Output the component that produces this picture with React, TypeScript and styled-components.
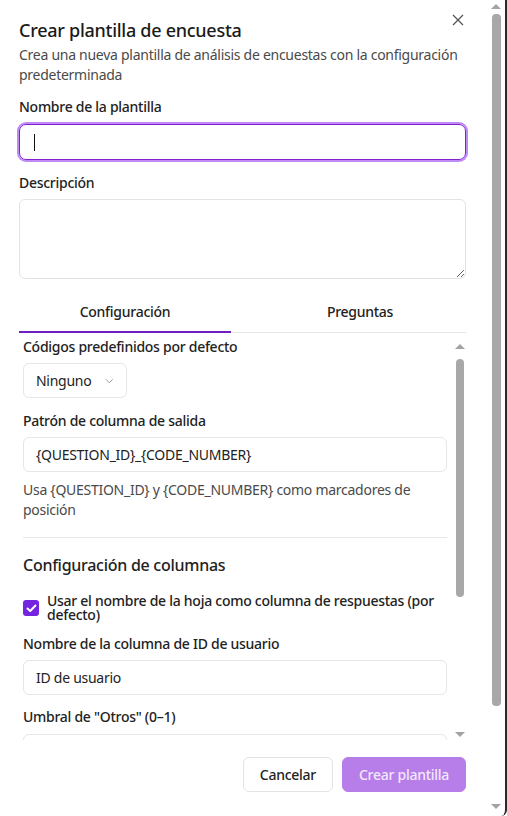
import React from "react";
import styled, { createGlobalStyle } from "styled-components";

const Global = createGlobalStyle`
  html, body { margin: 0; padding: 0; background: #ffffff; }
  body { font-family: "Noto Sans", "Open Sans", sans-serif; color: #1f1f1f; letter-spacing: -0.27px; -webkit-font-smoothing: antialiased; }
  * { box-sizing: border-box; }
`;

const Page = styled.div`
  display: flex;
  width: 507px;
  height: 816px;
  overflow: hidden;
  border-right: 2px solid #2a2a2a;
  border-bottom-right-radius: 6px;
`;

const Dialog = styled.div`
  position: relative;
  flex: 1;
  display: flex;
  flex-direction: column;
  padding: 18px 24px 0 19px;
`;

const CloseButton = styled.button`
  position: absolute;
  top: 12px;
  right: 24px;
  width: 16px;
  height: 16px;
  padding: 0;
  border: none;
  background: none;
  color: #555;
  display: flex;
  align-items: center;
  justify-content: center;
`;

const Title = styled.h2`
  margin: 0;
  font-size: 18px;
  line-height: 24px;
  font-weight: 500;
  color: #1a1a1a;
`;

const Description = styled.p`
  margin: 3px 0 0;
  font-size: 14px;
  line-height: 20px;
  color: #4a4a4a;
`;

const Label = styled.div<{ $top: number }>`
  margin-top: ${(p) => p.$top}px;
  font-size: 14px;
  line-height: 20px;
  font-weight: 500;
  color: #222;
`;

const FocusedInput = styled.div`
  margin-top: 7px;
  height: 36px;
  border: 1.5px solid #7e22ce;
  border-radius: 7px;
  box-shadow: 0 0 0 2px #bf8af5;
  display: flex;
  align-items: center;
  padding-left: 14px;
`;

const Caret = styled.span`
  width: 1px;
  height: 17px;
  background: #111;
`;

const TextArea = styled.textarea`
  margin-top: 6px;
  height: 80px;
  width: 100%;
  border: 1px solid #e3e3e3;
  border-radius: 6px;
  resize: vertical;
  font: inherit;
  outline: none;
`;

const TabList = styled.div`
  margin-top: 16px;
  display: grid;
  grid-template-columns: 1fr 1fr;
  column-gap: 23px;
  border-bottom: 1px solid #e6e6e6;
`;

const Tab = styled.div<{ $active?: boolean }>`
  height: 38px;
  padding-top: 7px;
  text-align: center;
  font-size: 14px;
  line-height: 20px;
  font-weight: 500;
  color: #222;
  border-bottom: 2px solid ${(p) => (p.$active ? "#6d1fc0" : "transparent")};
  margin-bottom: -1px;
`;

const ScrollArea = styled.div`
  height: 407px;
  display: flex;
  overflow: hidden;
`;

const ScrollContent = styled.div`
  flex: 1;
  display: flex;
  flex-direction: column;
  padding: 4px 7px 0 4px;
`;

const ScrollBar = styled.div<{ $width: number }>`
  width: ${(p) => p.$width}px;
  display: flex;
  flex-direction: column;
  align-items: center;
`;

const Arrow = styled.div<{ $down?: boolean; $h: number }>`
  height: ${(p) => p.$h}px;
  display: flex;
  align-items: center;
  justify-content: center;
  &::before {
    content: "";
    border-left: 5px solid transparent;
    border-right: 5px solid transparent;
    ${(p) => (p.$down ? "border-top: 5px solid #a3a3a3;" : "border-bottom: 5px solid #a3a3a3;")}
  }
`;

const Thumb = styled.div<{ $h: number; $mt: number; $w: number }>`
  margin-top: ${(p) => p.$mt}px;
  width: ${(p) => p.$w}px;
  height: ${(p) => p.$h}px;
  border-radius: 4px;
  background: #a8a8a8;
`;

const Spacer = styled.div`
  flex: 1;
`;

const Field = styled.div<{ $top?: number; $width?: string }>`
  margin-top: ${(p) => p.$top ?? 6}px;
  height: 35px;
  width: ${(p) => p.$width ?? "100%"};
  border: 1px solid #e6e6e6;
  border-radius: 6px;
  display: flex;
  align-items: center;
  padding: 0 12px;
  font-size: 14px;
  color: #222;
  flex-shrink: 0;
`;

const SelectField = styled(Field)`
  gap: 14px;
  padding: 0 12px;
`;

const Hint = styled.p`
  margin: 8px 0 0;
  font-size: 14px;
  line-height: 20px;
  color: #4a4a4a;
`;

const Divider = styled.hr`
  margin: 17px 0 0;
  border: none;
  border-top: 1px solid #e6e6e6;
  width: 100%;
`;

const SectionHeading = styled.h3`
  margin: 15px 0 0;
  font-size: 16px;
  line-height: 24px;
  font-weight: 500;
  color: #222;
`;

const CheckRow = styled.label`
  margin-top: 17px;
  display: flex;
  align-items: center;
  gap: 8px;
  font-size: 14px;
  line-height: 14px;
  font-weight: 500;
  color: #222;
`;

const CheckBox = styled.span`
  width: 16px;
  height: 16px;
  border-radius: 3px;
  background: #7424e0;
  flex-shrink: 0;
  display: flex;
  align-items: center;
  justify-content: center;
`;

const Footer = styled.div`
  margin-top: 17px;
  display: flex;
  justify-content: flex-end;
  gap: 9px;
`;

const Button = styled.button<{ $primary?: boolean }>`
  height: 35px;
  padding: 0 16px;
  border-radius: 6px;
  font-family: inherit;
  letter-spacing: inherit;
  font-size: 14px;
  font-weight: 500;
  border: 1px solid ${(p) => (p.$primary ? "#b77ee9" : "#e3e3e3")};
  background: ${(p) => (p.$primary ? "#b77ee9" : "#ffffff")};
  color: ${(p) => (p.$primary ? "#f3e8fd" : "#222")};
`;

const OuterBar = styled(ScrollBar)`
  padding-right: 3px;
`;

const hintText = "Usa {QUESTION_ID} y {CODE_NUMBER} como marcadores de posición";

export default function App() {
  return (
    <>
      <Global />
      <Page>
        <Dialog>
          <CloseButton aria-label="Cerrar">
            <svg width="12" height="12" viewBox="0 0 12 12" fill="none" stroke="#555" strokeWidth="1.3">
              <path d="M1 1L11 11M11 1L1 11" />
            </svg>
          </CloseButton>
          <Title>Crear plantilla de encuesta</Title>
          <Description>
            Crea una nueva plantilla de análisis de encuestas con la configuración predeterminada
          </Description>
          <Label $top={12}>Nombre de la plantilla</Label>
          <FocusedInput>
            <Caret />
          </FocusedInput>
          <Label $top={13}>Descripción</Label>
          <TextArea />
          <TabList>
            <Tab $active>Configuración</Tab>
            <Tab>Preguntas</Tab>
          </TabList>
          <ScrollArea>
            <ScrollContent>
              <Label $top={0}>Códigos predefinidos por defecto</Label>
              <SelectField $width="104px">
                Ninguno
                <svg width="10" height="6" viewBox="0 0 10 6" fill="none" stroke="#888" strokeWidth="1">
                  <path d="M1 1L5 5L9 1" />
                </svg>
              </SelectField>
              <Label $top={13}>Patrón de columna de salida</Label>
              <Field>{"{QUESTION_ID}_{CODE_NUMBER}"}</Field>
              <Hint>{hintText}</Hint>
              <Divider />
              <SectionHeading>Configuración de columnas</SectionHeading>
              <CheckRow>
                <CheckBox>
                  <svg width="11" height="9" viewBox="0 0 11 9" fill="none" stroke="#fff" strokeWidth="2" strokeLinecap="round" strokeLinejoin="round">
                    <path d="M1.5 4.5L4.2 7L9.5 1.5" />
                  </svg>
                </CheckBox>
                <span>Usar el nombre de la hoja como columna de respuestas (por defecto)</span>
              </CheckRow>
              <Label $top={12}>Nombre de la columna de ID de usuario</Label>
              <Field>ID de usuario</Field>
              <Label $top={12}>Umbral de "Otros" (0–1)</Label>
              <Field $top={7} />
            </ScrollContent>
            <ScrollBar $width={12}>
              <Arrow $h={26} />
              <Thumb $mt={0} $h={238} $w={8} />
              <Spacer />
              <Arrow $down $h={12} />
            </ScrollBar>
          </ScrollArea>
          <Footer>
            <Button>Cancelar</Button>
            <Button $primary>Crear plantilla</Button>
          </Footer>
        </Dialog>
        <OuterBar $width={15}>
          <Arrow $h={12} />
          <Thumb $mt={2} $h={692} $w={9} />
          <Spacer />
          <Arrow $down $h={20} />
        </OuterBar>
      </Page>
    </>
  );
}
